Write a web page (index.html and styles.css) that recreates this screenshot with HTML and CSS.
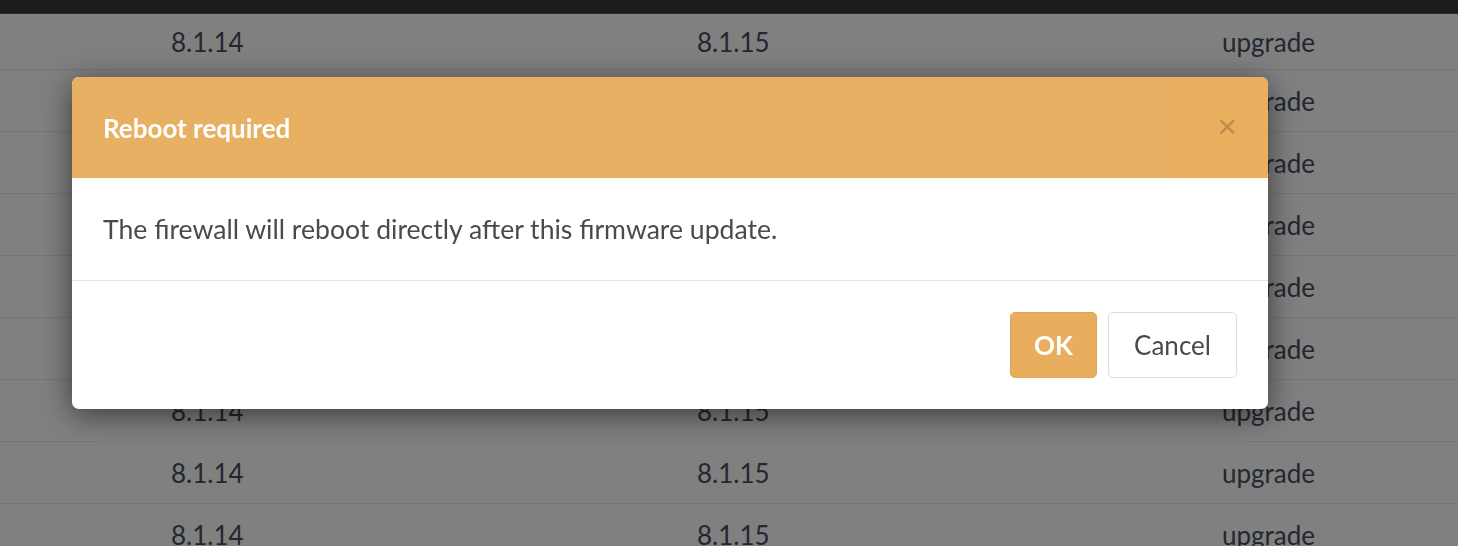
FILE: index.html
```html
<!DOCTYPE html>
<html lang="en">
<head>
<meta charset="utf-8">
<title>Reboot required</title>
<link rel="stylesheet" href="styles.css">
</head>
<body>
<div class="topbar"></div>
<div class="table">
  <div class="row"><span>8.1.14</span><span>8.1.15</span><span>upgrade</span></div>
  <div class="row"><span>8.1.14</span><span>8.1.15</span><span>upgrade</span></div>
  <div class="row"><span>8.1.14</span><span>8.1.15</span><span>upgrade</span></div>
  <div class="row"><span>8.1.14</span><span>8.1.15</span><span>upgrade</span></div>
  <div class="row"><span>8.1.14</span><span>8.1.15</span><span>upgrade</span></div>
  <div class="row"><span>8.1.14</span><span>8.1.15</span><span>upgrade</span></div>
  <div class="row"><span>8.1.14</span><span>8.1.15</span><span>upgrade</span></div>
  <div class="row"><span>8.1.14</span><span>8.1.15</span><span>upgrade</span></div>
  <div class="row"><span>8.1.14</span><span>8.1.15</span><span>upgrade</span></div>
</div>

<div class="modal-layer">
  <div class="modal">
    <div class="modal-header">
      <h4 class="modal-title">Reboot required</h4>
      <button class="close" type="button">&times;</button>
    </div>
    <div class="modal-body">The firewall will reboot directly after this firmware update.</div>
    <div class="modal-footer">
      <button class="btn btn-ok" type="button">OK</button>
      <button class="btn btn-cancel" type="button">Cancel</button>
    </div>
  </div>
</div>
</body>
</html>
```

FILE: styles.css
```css
html, body {
  margin: 0;
  padding: 0;
  height: 100%;
  overflow: hidden;
}

body {
  background: #808080;
  font-family: "Lato", "Noto Sans", sans-serif;
}

.topbar {
  height: 13px;
  background: #1c1c1c;
  border-bottom: 1px solid #2c2c2c;
}

.table {
  display: flex;
  flex-direction: column;
}

.row {
  display: grid;
  grid-template-columns: 526px 525px 1fr;
  align-items: center;
  height: 62px;
  padding-left: 171px;
  border-bottom: 1px solid #767676;
  box-sizing: border-box;
  color: #23272f;
  font-size: 26px;
}

.row:first-child {
  height: 56px;
}

.modal-layer {
  position: fixed;
  inset: 0;
  padding: 77px 0 0 72px;
}

.modal {
  width: 1196px;
  background: #fff;
  border-radius: 7px;
  overflow: hidden;
  box-shadow: 0 6px 30px rgba(0, 0, 0, 0.55);
}

.modal-header {
  display: flex;
  align-items: center;
  justify-content: space-between;
  height: 101px;
  background: #e8b062;
  padding-left: 31px;
  box-sizing: border-box;
}

.modal-title {
  margin: 0;
  color: #fff;
  font-size: 26px;
  font-weight: 700;
}

.close {
  width: 96px;
  height: 100%;
  padding: 0 31px 4px 0;
  border: 0;
  background: #e9af5f;
  color: rgba(0, 0, 0, 0.2);
  font-family: "Liberation Sans", sans-serif;
  font-size: 34px;
  line-height: 1;
  text-align: right;
}

.modal-body {
  height: 102px;
  display: flex;
  align-items: center;
  padding: 0 31px;
  color: #4a4a4a;
  font-size: 26.6px;
  border-bottom: 1px solid #e5e5e5;
}

.modal-footer {
  display: flex;
  justify-content: flex-end;
  gap: 11px;
  padding: 31px;
}

.btn {
  height: 66px;
  border-radius: 5px;
  font-family: inherit;
  font-size: 26px;
  cursor: pointer;
}

.btn-ok {
  width: 87px;
  background: #e8ae5e;
  border: 1px solid #dfa556;
  color: #fff;
  font-weight: 700;
}

.btn-cancel {
  width: 129px;
  background: #fff;
  border: 1px solid #dedede;
  color: #4a4a4a;
}
```
